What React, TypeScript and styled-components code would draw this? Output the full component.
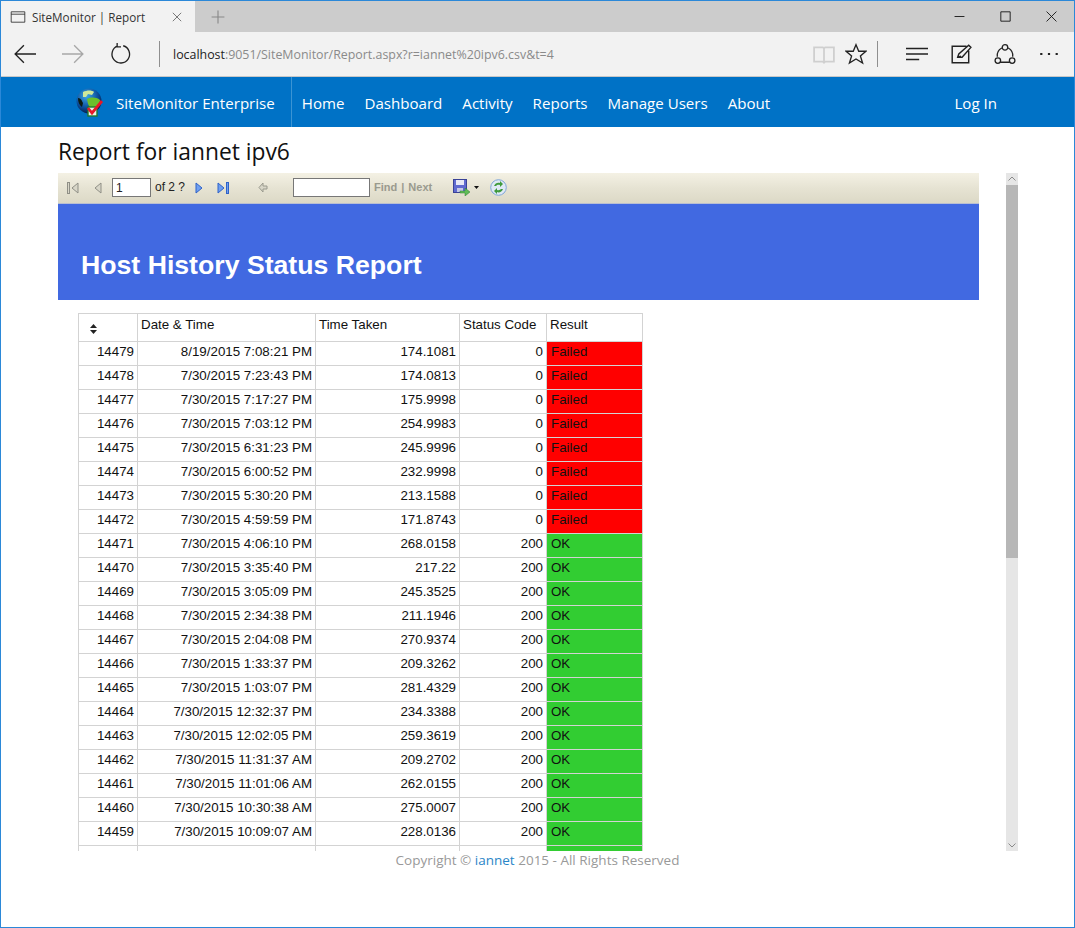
import React from 'react';
import styled, {createGlobalStyle} from 'styled-components';

const GlobalStyle = createGlobalStyle`
  html, body {
    margin: 0;
    padding: 0;
    background: #fff;
  }
  * {
    box-sizing: border-box;
  }
`;

const UI_FONT = `"Open Sans", "Noto Sans", sans-serif`;
const REPORT_FONT = `"Liberation Sans", Arial, sans-serif`;

const rows: [string, string, string, string, string][] = [
    ['14479', '8/19/2015 7:08:21 PM', '174.1081', '0', 'Failed'],
    ['14478', '7/30/2015 7:23:43 PM', '174.0813', '0', 'Failed'],
    ['14477', '7/30/2015 7:17:27 PM', '175.9998', '0', 'Failed'],
    ['14476', '7/30/2015 7:03:12 PM', '254.9983', '0', 'Failed'],
    ['14475', '7/30/2015 6:31:23 PM', '245.9996', '0', 'Failed'],
    ['14474', '7/30/2015 6:00:52 PM', '232.9998', '0', 'Failed'],
    ['14473', '7/30/2015 5:30:20 PM', '213.1588', '0', 'Failed'],
    ['14472', '7/30/2015 4:59:59 PM', '171.8743', '0', 'Failed'],
    ['14471', '7/30/2015 4:06:10 PM', '268.0158', '200', 'OK'],
    ['14470', '7/30/2015 3:35:40 PM', '217.22', '200', 'OK'],
    ['14469', '7/30/2015 3:05:09 PM', '245.3525', '200', 'OK'],
    ['14468', '7/30/2015 2:34:38 PM', '211.1946', '200', 'OK'],
    ['14467', '7/30/2015 2:04:08 PM', '270.9374', '200', 'OK'],
    ['14466', '7/30/2015 1:33:37 PM', '209.3262', '200', 'OK'],
    ['14465', '7/30/2015 1:03:07 PM', '281.4329', '200', 'OK'],
    ['14464', '7/30/2015 12:32:37 PM', '234.3388', '200', 'OK'],
    ['14463', '7/30/2015 12:02:05 PM', '259.3619', '200', 'OK'],
    ['14462', '7/30/2015 11:31:37 AM', '209.2702', '200', 'OK'],
    ['14461', '7/30/2015 11:01:06 AM', '262.0155', '200', 'OK'],
    ['14460', '7/30/2015 10:30:38 AM', '275.0007', '200', 'OK'],
    ['14459', '7/30/2015 10:09:07 AM', '228.0136', '200', 'OK'],
    ['14458', '7/30/2015 9:40:03 AM', '208.8754', '200', 'OK'],
];

const Window = styled.div`
  width: 1075px;
  height: 928px;
  border: 1px solid #2b88d8;
  display: flex;
  flex-direction: column;
  overflow: hidden;
  background: #fff;
  font-family: ${UI_FONT};
`;

const TabStrip = styled.div`
  height: 31px;
  flex: none;
  display: flex;
  align-items: stretch;
  background: #cccccc;
`;

const Tab = styled.div`
  width: 194px;
  background: #f2f2f2;
  display: flex;
  align-items: center;
  padding: 0 11px 0 9px;
  font-size: 11.7px;
  color: #333;
`;

const TabTitle = styled.span`
  flex: 1;
  margin-left: 6px;
  white-space: nowrap;
`;

const NewTab = styled.div`
  width: 46px;
  display: flex;
  align-items: center;
  justify-content: center;
`;

const WindowButtons = styled.div`
  margin-left: auto;
  display: flex;
`;

const WindowButton = styled.div`
  width: 46px;
  display: flex;
  align-items: center;
  justify-content: center;
`;

const Toolbar = styled.div`
  height: 45px;
  flex: none;
  display: flex;
  align-items: center;
  padding-right: 4px;
  background: #f2f2f2;
  border-bottom: 1px solid #c8c8c8;
`;

const ToolButton = styled.div<{ $w?: number }>`
  width: ${p => p.$w ?? 48}px;
  height: 44px;
  flex: none;
  display: flex;
  align-items: center;
  justify-content: center;
`;

const ToolDivider = styled.div<{ $left: number; $right: number }>`
  width: 1px;
  height: 26px;
  flex: none;
  background: #8f8f8f;
  margin: 0 ${p => p.$right}px 0 ${p => p.$left}px;
`;

const Address = styled.div`
  flex: 1;
  padding-left: 13px;
  font-size: 12.4px;
  color: #8a8a8a;
  white-space: nowrap;
`;

const Host = styled.span`
  color: #222;
`;

const NavBar = styled.nav`
  height: 50px;
  flex: none;
  display: flex;
  align-items: stretch;
  background: #0072c6;
  padding-left: 75px;
  font-size: 15.1px;
  color: #fff;
`;

const Brand = styled.div`
  display: flex;
  align-items: center;
  gap: 10px;
  padding: 1px 16px 0 0;
  border-right: 1px solid #3b94d4;
`;

const NavLinks = styled.div`
  display: flex;
  align-items: center;
  gap: 20px;
  margin-left: 10px;
  padding-top: 1px;
`;

const LogIn = styled.div`
  margin-left: auto;
  margin-right: 77px;
  padding-top: 1px;
  display: flex;
  align-items: center;
`;

const Main = styled.main`
  flex: 1;
  min-height: 0;
  padding: 0 56px 0 57px;
  display: flex;
  flex-direction: column;
`;

const Title = styled.h2`
  height: 46px;
  flex: none;
  margin: 0;
  padding-top: 2px;
  display: flex;
  align-items: center;
  font-weight: 400;
  font-size: 22.8px;
  color: #111;
`;

const Viewer = styled.div`
  height: 678px;
  flex: none;
  display: flex;
  justify-content: space-between;
`;

const ViewerBody = styled.div`
  width: 921px;
  overflow: hidden;
  display: flex;
  flex-direction: column;
  font-family: ${REPORT_FONT};
`;

const ReportBar = styled.div`
  height: 31px;
  flex: none;
  display: flex;
  align-items: center;
  padding: 0 0 1px 9px;
  font-size: 12px;
  color: #222;
  background: linear-gradient(180deg, #f4f1e4 0%, #e6e3d3 50%, #dcd9c6 100%);
  border-bottom: 1px solid #b9bfd2;
`;

const BarIcon = styled.span<{ $left?: number }>`
  display: flex;
  flex: none;
  margin-left: ${p => p.$left ?? 0}px;
`;

const PageInput = styled.div<{ $w: number; $left: number }>`
  width: ${p => p.$w}px;
  height: 19px;
  flex: none;
  margin-left: ${p => p.$left}px;
  padding: 2px 0 0 3px;
  background: #fff;
  border: 1px solid #777;
  font-size: 12px;
  line-height: 14px;
`;

const BarText = styled.span<{ $left: number; $muted?: boolean }>`
  margin-left: ${p => p.$left}px;
  margin-top: -1px;
  white-space: nowrap;
  font-size: ${p => (p.$muted ? 11 : 12)}px;
  font-weight: ${p => (p.$muted ? 700 : 400)};
  color: ${p => (p.$muted ? '#9a9a8e' : '#222')};
`;

const ReportBanner = styled.div`
  height: 96px;
  flex: none;
  background: #4169e1;
  color: #fff;
  padding: 45px 0 0 23px;
  font-weight: 700;
  font-size: 26.67px;
  line-height: 32px;
`;

const TableWrap = styled.div`
  padding: 13px 0 0 20px;
`;

const Table = styled.table`
  width: 565px;
  table-layout: fixed;
  border-collapse: collapse;
  font-size: 13.33px;
  color: #111;
`;

const HeadCell = styled.th<{ $w: number }>`
  width: ${p => p.$w}px;
  height: 28px;
  padding: 3px 2px 0 3px;
  border: 1px solid #d3d3d3;
  font-weight: 400;
  text-align: left;
  vertical-align: top;
`;

const SortCell = styled(HeadCell)`
  padding: 8px 0 0 11px;
`;

const NumCell = styled.td`
  height: 24px;
  padding: 0 3px 4px 2px;
  border: 1px solid #d3d3d3;
  text-align: right;
  white-space: nowrap;
`;

const ResultCell = styled.td<{ $ok: boolean }>`
  height: 24px;
  padding: 0 3px 4px 4px;
  border: 1px solid #d3d3d3;
  background: ${p => (p.$ok ? '#32cd32' : '#ff0000')};
`;

const Scrollbar = styled.div`
  width: 12px;
  flex: none;
  display: flex;
  flex-direction: column;
  background: #e6e6e6;
`;

const ScrollArrow = styled.div`
  height: 12px;
  flex: none;
  display: flex;
  align-items: center;
  justify-content: center;
`;

const ScrollThumb = styled.div`
  height: 373px;
  flex: none;
  background: #b7b7b7;
`;

const ScrollTrack = styled.div`
  flex: 1;
`;

const Footer = styled.footer`
  text-align: center;
  padding-right: 1px;
  font-size: 13.5px;
  line-height: 18px;
  color: #999;
`;

const FooterLink = styled.span`
  color: #2a86c8;
`;

const Globe = () => (
    <svg width="30" height="30" viewBox="0 0 30 30">
        <defs>
            <radialGradient id="sea" cx="0.4" cy="0.3" r="0.75">
                <stop offset="0" stopColor="#3fa9e8"/>
                <stop offset="0.6" stopColor="#0b4f9e"/>
                <stop offset="1" stopColor="#04163f"/>
            </radialGradient>
        </defs>
        <circle cx="13" cy="13" r="12.500" fill="url(#sea)"/>
        <path d="M7 4c4-2 9-2 11 0l-2 3-4-1-2 3-3 0z" fill="#cfe89a"/>
        <path d="M11 11c4-2 9-2 13 1 0 3-2 7-5 9-3 0-6-2-7-5z" fill="#6cbf2c"/>
        <path d="M2 10c3 0 4 3 5 5l-1 4c-3-2-4-5-4-9z" fill="#0b1a12"/>
        <rect x="12" y="19" width="9" height="9" fill="#eaf6e6" stroke="#1d7a2e" strokeWidth="1.4"/>
        <path d="M12 20l4 5 10-12" fill="none" stroke="#e81828" strokeWidth="2.8"/>
    </svg>
);

const Line = ({d, color = '#222', w = 1.2, size = 20}: { d: string; color?: string; w?: number; size?: number }) => (
    <svg width={size} height={size} viewBox="0 0 20 20" fill="none" stroke={color} strokeWidth={w}>
        <path d={d}/>
    </svg>
);

const Tri = ({dir, active}: { dir: 'l' | 'r'; active?: boolean }) => (
    <svg width="8" height="12" viewBox="0 0 8 12">
        <path
            d={dir === 'l' ? 'M7 1v10L1 6z' : 'M1 1v10l6-5z'}
            fill={active ? '#6f9ff0' : '#d8d6c8'}
            stroke={active ? '#2f62c8' : '#8f8f86'}
        />
    </svg>
);

const Edge = ({active}: { active?: boolean }) => (
    <svg width="3" height="12" viewBox="0 0 3 12">
        <rect x="0.5" y="0.5" width="2" height="11" fill={active ? '#6f9ff0' : '#d8d6c8'} stroke={active ? '#2f62c8' : '#8f8f86'}/>
    </svg>
);

const SaveIcon = () => (
    <svg width="17" height="17" viewBox="0 0 17 17">
        <rect x="0.5" y="0.5" width="13" height="13" fill="#5f6ad0" stroke="#3a4296"/>
        <rect x="3" y="1" width="8" height="5" fill="#e6e8f6"/>
        <rect x="4" y="9" width="6" height="4" fill="#c4c8e6"/>
        <path d="M7 12h5V9l5 4-5 4v-3H7z" fill="#5fbc58" stroke="#2f7d31" strokeWidth="0.5"/>
    </svg>
);

const RefreshIcon = () => (
    <svg width="17" height="17" viewBox="0 0 17 17">
        <circle cx="8.5" cy="8.5" r="7.8" fill="#dfe9f6" stroke="#7fa6d8"/>
        <path d="M4 7c1-3 4-4 6-3V2l3 3-3 3V6c-2-.5-3 0-4 1z" fill="#3f9a3c"/>
        <path d="M13 10c-1 3-4 4-6 3v2l-3-3 3-3v2c2 .5 3 0 4-1z" fill="#3f9a3c"/>
    </svg>
);

const App = () => (
    <>
        <GlobalStyle/>
        <Window>
            <TabStrip>
                <Tab>
                    <Line size={16} w={1} d="M1.5 3.5h17v13h-17zM1.5 6.5h17"/>
                    <TabTitle>SiteMonitor | Report</TabTitle>
                    <Line size={14} w={1} color="#444" d="M4 4l12 12M16 4L4 16"/>
                </Tab>
                <NewTab>
                    <Line size={16} w={1.4} color="#888" d="M10 2v16M2 10h16"/>
                </NewTab>
                <WindowButtons>
                    <WindowButton><Line size={11} w={1.6} color="#111" d="M1 10h18"/></WindowButton>
                    <WindowButton><Line size={11} w={1.6} color="#111" d="M1.5 1.5h17v17h-17z"/></WindowButton>
                    <WindowButton><Line size={11} w={1.6} color="#111" d="M1 1l18 18M19 1L1 19"/></WindowButton>
                </WindowButtons>
            </TabStrip>
            <Toolbar>
                <ToolButton><Line size={22} d="M20 10H1M9 2l-8 8 8 8"/></ToolButton>
                <ToolButton><Line size={22} color="#a8a8a8" d="M0 10h19M11 2l8 8-8 8"/></ToolButton>
                <ToolButton><Line size={22} d="M12 2.5a8 8 0 1 1-5 .2M6.5 0v3.5H10"/></ToolButton>
                <ToolDivider $left={14} $right={0}/>
                <Address><Host>localhost</Host>:9051/SiteMonitor/Report.aspx?r=iannet%20ipv6.csv&amp;t=4</Address>
                <ToolButton $w={32}><Line size={22} color="#cfcfcf" w={1.6} d="M1 4h8l1 1 1-1h8v13h-8l-1 1-1-1H1zM10 5v12"/></ToolButton>
                <ToolButton $w={32}><Line size={22} d="M10 1.5l2.5 6h6.5l-5 4.2 2 6.5L10 14.5l-6 3.7 2-6.5-5-4.2h6.5z"/></ToolButton>
                <ToolDivider $left={5} $right={17}/>
                <ToolButton $w={44}><Line size={22} w={1.3} d="M0 5h20M0 10h20M0 15h12"/></ToolButton>
                <ToolButton $w={44}><Line size={22} w={1.3} d="M15 3H2v15h15V7M7 13l1-3L17 2l2 2-8 9zM7 13l3-1"/></ToolButton>
                <ToolButton $w={44}><Line size={22} w={1.2} d="M7 4.5a8 8 0 0 0-4 8M13 4.5a8 8 0 0 1 4 8M6 17.5h8M12.5 4a2.5 2.5 0 1 1-5 0 2.5 2.5 0 0 1 5 0zM6 16a2.5 2.5 0 1 1-5 0 2.5 2.5 0 0 1 5 0zM19 16a2.5 2.5 0 1 1-5 0 2.5 2.5 0 0 1 5 0z"/></ToolButton>
                <ToolButton $w={43}><Line size={22} w={2} d="M2 10h2M9 10h2M16 10h2"/></ToolButton>
            </Toolbar>
            <NavBar>
                <Brand><Globe/>SiteMonitor Enterprise</Brand>
                <NavLinks>
                    <span>Home</span>
                    <span>Dashboard</span>
                    <span>Activity</span>
                    <span>Reports</span>
                    <span>Manage Users</span>
                    <span>About</span>
                </NavLinks>
                <LogIn>Log In</LogIn>
            </NavBar>
            <Main>
                <Title>Report for iannet ipv6</Title>
                <Viewer>
                    <ViewerBody>
                        <ReportBar>
                            <BarIcon><Edge/></BarIcon>
                            <BarIcon $left={1}><Tri dir="l"/></BarIcon>
                            <BarIcon $left={15}><Tri dir="l"/></BarIcon>
                            <PageInput $w={39} $left={10}>1</PageInput>
                            <BarText $left={4}>of 2 ?</BarText>
                            <BarIcon $left={10}><Tri dir="r" active/></BarIcon>
                            <BarIcon $left={14}><Tri dir="r" active/></BarIcon>
                            <BarIcon $left={1}><Edge active/></BarIcon>
                            <BarIcon $left={29}>
                                <svg width="10" height="11" viewBox="0 0 10 11">
                                    <path d="M5 1v3h4v3H5v3L1 5.500z" fill="#d8d6c8" stroke="#9a9a8e"/>
                                </svg>
                            </BarIcon>
                            <PageInput $w={77} $left={25}/>
                            <BarText $left={4} $muted>Find</BarText>
                            <BarText $left={4} $muted>|</BarText>
                            <BarText $left={4} $muted>Next</BarText>
                            <BarIcon $left={21}><SaveIcon/></BarIcon>
                            <BarIcon $left={4}>
                                <svg width="5" height="3" viewBox="0 0 5 3"><path d="M0 0h5L2.500 3z" fill="#111"/></svg>
                            </BarIcon>
                            <BarIcon $left={11}><RefreshIcon/></BarIcon>
                        </ReportBar>
                        <ReportBanner>Host History Status Report</ReportBanner>
                        <TableWrap>
                            <Table>
                                <thead>
                                    <tr>
                                        <SortCell $w={59}>
                                            <svg width="7" height="10" viewBox="0 0 7 10">
                                                <path d="M3.500 0L7 4H0zM0 6h7L3.500 10z" fill="#222"/>
                                            </svg>
                                        </SortCell>
                                        <HeadCell $w={178}>Date &amp; Time</HeadCell>
                                        <HeadCell $w={144}>Time Taken</HeadCell>
                                        <HeadCell $w={87}>Status Code</HeadCell>
                                        <HeadCell $w={96}>Result</HeadCell>
                                    </tr>
                                </thead>
                                <tbody>
                                    {rows.map(r => (
                                        <tr key={r[0]}>
                                            <NumCell>{r[0]}</NumCell>
                                            <NumCell>{r[1]}</NumCell>
                                            <NumCell>{r[2]}</NumCell>
                                            <NumCell>{r[3]}</NumCell>
                                            <ResultCell $ok={r[4] === 'OK'}>{r[4]}</ResultCell>
                                        </tr>
                                    ))}
                                </tbody>
                            </Table>
                        </TableWrap>
                    </ViewerBody>
                    <Scrollbar>
                        <ScrollArrow><Line size={10} w={2} color="#8a8a8a" d="M3 13l7-7 7 7"/></ScrollArrow>
                        <ScrollThumb/>
                        <ScrollTrack/>
                        <ScrollArrow><Line size={10} w={2} color="#8a8a8a" d="M3 7l7 7 7-7"/></ScrollArrow>
                    </Scrollbar>
                </Viewer>
                <Footer>Copyright © <FooterLink>iannet</FooterLink> 2015 - All Rights Reserved</Footer>
            </Main>
        </Window>
    </>
);

export default App;
